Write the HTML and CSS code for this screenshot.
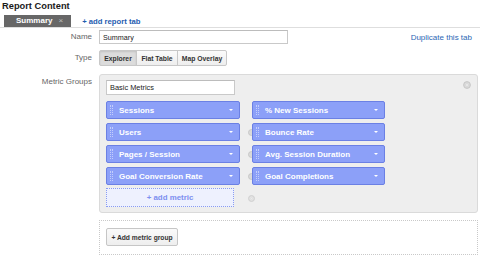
FILE: index.html
```html
<!DOCTYPE html>
<html>
<head>
<meta charset="utf-8">
<link rel="stylesheet" href="styles.css">
</head>
<body>
<div class="page">
  <h1 class="title">Report Content</h1>
  <div class="tabbar">
    <div class="tab"><span>Summary</span><span class="tab-x">×</span></div>
    <a class="addtab">+ add report tab</a>
  </div>

  <div class="row row-name">
    <label class="lbl">Name</label>
    <div class="row-main">
      <div class="input name-input">Summary</div>
      <a class="dup">Duplicate this tab</a>
    </div>
  </div>

  <div class="row row-type">
    <label class="lbl">Type</label>
    <div class="seg">
      <span class="segbtn segbtn-on w-explorer">Explorer</span>
      <span class="segbtn w-flat">Flat Table</span>
      <span class="segbtn w-map">Map Overlay</span>
    </div>
  </div>

  <div class="row row-groups">
    <label class="lbl lbl-top">Metric Groups</label>
    <div class="groups">
      <div class="group">
        <svg class="close" viewBox="0 0 8 8"><circle cx="4" cy="4" r="3.4" fill="#d9d9d9" stroke="#c4c4c4" stroke-width="0.9"/><path d="M2.8 2.8L5.2 5.2M5.2 2.8L2.8 5.2" stroke="#eaeaea" stroke-width="0.8"/></svg>
        <div class="input group-input">Basic Metrics</div>
        <div class="chips">
          <div class="chip"><i class="grip"></i><span class="chip-t">Sessions</span><i class="arrow"></i></div>
          <span></span>
          <div class="chip"><i class="grip"></i><span class="chip-t">% New Sessions</span><i class="arrow"></i></div>

          <div class="chip"><i class="grip"></i><span class="chip-t">Users</span><i class="arrow"></i></div>
          <svg class="rm" viewBox="0 0 7 7"><circle cx="3.5" cy="3.5" r="3" fill="#d9d9d9" stroke="#c4c4c4" stroke-width="0.9"/></svg>
          <div class="chip"><i class="grip"></i><span class="chip-t">Bounce Rate</span><i class="arrow"></i></div>

          <div class="chip"><i class="grip"></i><span class="chip-t">Pages / Session</span><i class="arrow"></i></div>
          <svg class="rm" viewBox="0 0 7 7"><circle cx="3.5" cy="3.5" r="3" fill="#d9d9d9" stroke="#c4c4c4" stroke-width="0.9"/></svg>
          <div class="chip"><i class="grip"></i><span class="chip-t">Avg. Session Duration</span><i class="arrow"></i></div>

          <div class="chip"><i class="grip"></i><span class="chip-t">Goal Conversion Rate</span><i class="arrow"></i></div>
          <svg class="rm" viewBox="0 0 7 7"><circle cx="3.5" cy="3.5" r="3" fill="#d9d9d9" stroke="#c4c4c4" stroke-width="0.9"/></svg>
          <div class="chip"><i class="grip"></i><span class="chip-t">Goal Completions</span><i class="arrow"></i></div>

          <div class="addmetric">+ add metric</div>
          <svg class="rm rm-last" viewBox="0 0 7 7"><circle cx="3.5" cy="3.5" r="3" fill="#e0e0e0" stroke="#cdcdcd" stroke-width="0.9"/><path d="M2.5 2.5L4.5 4.5M4.5 2.5L2.5 4.5" stroke="#ececec" stroke-width="0.7"/></svg>
          <span></span>
        </div>
      </div>
      <div class="addgroup">
        <span class="addgroup-btn">+ Add metric group</span>
      </div>
    </div>
  </div>
</div>
</body>
</html>
```

FILE: styles.css
```css
* { box-sizing: border-box; }
html, body { margin: 0; padding: 0; background: #fff; }
body {
  font-family: "Liberation Sans", Arial, Helvetica, sans-serif;
  color: #222;
  width: 480px;
  height: 255px;
  overflow: hidden;
}
.page { padding: 0 2px 0 0; }

.title {
  margin: 0;
  padding-left: 2px;
  height: 12px;
  font-size: 9.3px;
  line-height: 12px;
  font-weight: bold;
  color: #1a1a1a;
}

.tabbar {
  display: flex;
  align-items: center;
  margin-top: 3px;
  margin-right: -2px;
  border-bottom: 1px solid #dedede;
}
.tab {
  display: flex;
  align-items: center;
  gap: 6px;
  height: 12px;
  margin-left: 4px;
  padding: 0 8px 0 12px;
  background: #676767;
  color: #fff;
  font-size: 8px;
  font-weight: bold;
  line-height: 12px;
}
.tab-x { color: #bdbdbd; font-weight: normal; font-size: 8px; }
.addtab {
  margin-left: 11px;
  font-size: 7.7px;
  font-weight: bold;
  color: #1f5db0;
}

.row {
  display: grid;
  grid-template-columns: 92px 1fr;
  column-gap: 7px;
  align-items: center;
}
.lbl {
  text-align: right;
  font-size: 8px;
  line-height: 10px;
  color: #666;
  white-space: nowrap;
}
.lbl-top { align-self: start; padding-top: 3px; }

.row-name { margin-top: 2px; }
.row-main { display: flex; align-items: center; justify-content: space-between; padding-right: 6px; }
.input {
  background: #fff;
  border: 1px solid #c9c9c9;
  border-top-color: #bcbcbc;
  display: flex;
  align-items: center;
  padding-left: 3px;
  color: #222;
}
.name-input { width: 189px; height: 14px; font-size: 7.2px; }
.dup { font-size: 8px; color: #2b68b5; }

.row-type { margin-top: 6px; }
.seg { display: flex; height: 16px; }
.segbtn {
  display: flex;
  align-items: center;
  justify-content: center;
  height: 16px;
  border: 1px solid #c8c8c8;
  background: linear-gradient(#fbfbfb, #eeeeee);
  font-size: 6.8px;
  font-weight: bold;
  color: #333;
  margin-left: -1px;
}
.segbtn:first-child { margin-left: 0; border-radius: 2px 0 0 2px; }
.segbtn:last-child { border-radius: 0 2px 2px 0; }
.segbtn-on { background: #dcdcdc; box-shadow: inset 0 1px 2px rgba(0,0,0,0.12); }
.w-explorer { width: 38px; }
.w-flat { width: 42px; }
.w-map { width: 50px; }

.row-groups { margin-top: 8px; align-items: start; }
.groups { display: flex; flex-direction: column; gap: 7px; }

.group {
  position: relative;
  background: #eeeeee;
  border: 1px solid #dadada;
  border-radius: 3px;
  padding: 5px 6px 5px 6px;
}
.close { position: absolute; top: 6px; right: 6px; width: 8px; height: 8px; }
.group-input { width: 129px; height: 15px; font-size: 7.4px; }

.chips {
  display: grid;
  grid-template-columns: 134px 12px 133px;
  grid-auto-rows: 18px;
  row-gap: 4px;
  margin-top: 6px;
  align-items: center;
}
.chip {
  display: flex;
  align-items: center;
  height: 18px;
  background: #8ca0f8;
  border: 1px solid #6b80e4;
  border-radius: 2px;
  padding: 0 6px 0 3px;
  color: #fff;
  font-size: 8px;
  font-weight: bold;
}
.grip {
  width: 3px;
  height: 10px;
  border-left: 1px dotted #c3cdfc;
  border-right: 1px dotted #c3cdfc;
}
.chip-t { margin-left: 6px; white-space: nowrap; }
.arrow {
  margin-left: auto;
  width: 0;
  height: 0;
  border-left: 2.5px solid transparent;
  border-right: 2.5px solid transparent;
  border-top: 2px solid #fff;
}
.rm {
  width: 7px;
  height: 7px;
  justify-self: end;
  margin-right: -2.5px;
}
.rm-last { margin-top: 0; }

.addmetric {
  width: 128px;
  height: 19px;
  margin-top: -1px;
  border: 1px dotted #8a9cf2;
  background: #eef1fe;
  display: flex;
  align-items: center;
  justify-content: center;
  font-size: 7.9px;
  font-weight: bold;
  color: #7d8ff0;
}

.addgroup {
  border: 1px dotted #c9c9c9;
  padding: 7px 6px 7px;
  height: 35px;
}
.addgroup-btn {
  display: flex;
  align-items: center;
  justify-content: center;
  width: 72px;
  height: 18px;
  border: 1px solid #c6c6c6;
  border-radius: 2px;
  background: linear-gradient(#fafafa, #eeeeee);
  font-size: 6.7px;
  font-weight: bold;
  color: #333;
}
```
